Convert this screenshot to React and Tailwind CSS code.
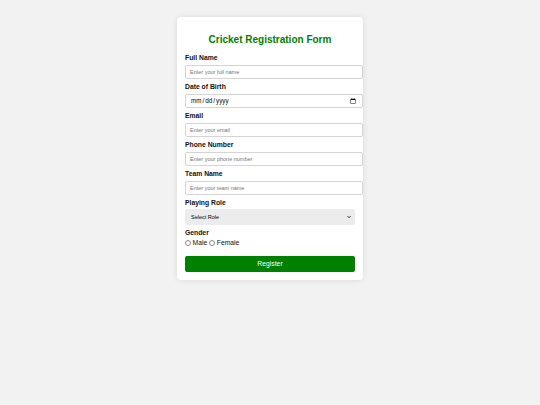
export default function App() {
  const fields = [
    { label: 'Full Name', type: 'text', ph: 'Enter your full name' },
    { label: 'Date of Birth', type: 'date' },
    { label: 'Email', type: 'email', ph: 'Enter your email' },
    { label: 'Phone Number', type: 'tel', ph: 'Enter your phone number' },
    { label: 'Team Name', type: 'text', ph: 'Enter your team name' },
  ]

  return (
    <div className="min-h-[405px] bg-[#f2f2f2] pt-[17px] font-['Liberation_Sans',Arial,sans-serif]">
      <div className="mx-auto w-[186px] rounded-[4px] bg-white p-[8px] shadow-[0_0_6px_rgba(0,0,0,0.1)]">
        <h1 className="mt-[8px] mb-[6px] text-center text-[10px] leading-[14px] font-bold text-[#008000]">
          Cricket Registration Form
        </h1>

        {fields.map(f => (
          <div key={f.label} className="mb-[3px]">
            <label className="mb-[2px] block text-[6.8px] leading-[10px] font-bold text-[#111]">
              {f.label}
            </label>
            <input
              type={f.type}
              placeholder={f.ph}
              className="box-content block h-[12px] w-[168px] rounded-[2px] border border-[#d4d4d4] px-[4px] py-0 text-[5.5px] text-black placeholder:text-[#757575] [&[type=date]]:text-[6.3px]"
            />
          </div>
        ))}

        {/* Role */}
        <div className="mb-[3px]">
          <label className="mb-[1px] block text-[6.8px] leading-[10px] font-bold text-[#111]">
            Playing Role
          </label>
          <div className="relative w-[170px]">
            <select className="block h-[16px] w-[170px] appearance-none rounded-[2px] border border-[#ececec] bg-[#ececec] px-[5px] text-[5.5px] text-black">
              <option>Select Role</option>
              <option>Batsman</option>
              <option>Bowler</option>
              <option>All-Rounder</option>
              <option>Wicket Keeper</option>
            </select>
            <svg
              viewBox="0 0 10 10"
              className="pointer-events-none absolute top-[6px] right-[4px] h-[4px] w-[4px]"
            >
              <path d="M1.5 3 L5 6.5 L8.5 3" fill="none" stroke="#111" strokeWidth="2.4" />
            </svg>
          </div>
        </div>

        {/* Gender */}
        <div>
          <label className="block text-[6.8px] leading-[10px] font-bold text-[#111]">Gender</label>
          <div className="flex h-[10px] items-center text-[6.8px] text-[#111]">
            <input
              type="radio"
              name="g"
              className="m-0 mr-[1.5px] h-[6px] w-[6px] appearance-none rounded-full border border-[#8a8a8a] bg-white checked:bg-[#555]"
            />
            <span className="mr-[2px]">Male</span>
            <input
              type="radio"
              name="g"
              className="m-0 mr-[1.5px] h-[6px] w-[6px] appearance-none rounded-full border border-[#8a8a8a] bg-white checked:bg-[#555]"
            />
            <span>Female</span>
          </div>
        </div>

        <button className="mt-[8px] block h-[16px] w-[170px] rounded-[2px] bg-[#008000] text-[6.8px] text-white">
          Register
        </button>
      </div>
    </div>
  )
}
